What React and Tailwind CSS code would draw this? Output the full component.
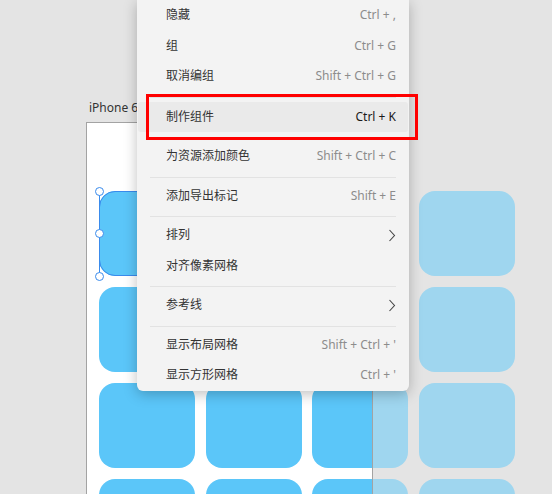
const menuItems = [
  { label: '隐藏', shortcut: 'Ctrl + ,' },
  { label: '组', shortcut: 'Ctrl + G' },
  { label: '取消编组', shortcut: 'Shift + Ctrl + G' },
  { sep: true, first: true },
  { label: '制作组件', shortcut: 'Ctrl + K', active: true },
  { sep: true },
  { label: '为资源添加颜色', shortcut: 'Shift + Ctrl + C' },
  { sep: true },
  { label: '添加导出标记', shortcut: 'Shift + E' },
  { sep: true },
  { label: '排列', arrow: true },
  { label: '对齐像素网格' },
  { sep: true },
  { label: '参考线', arrow: true },
  { sep: true },
  { label: '显示布局网格', shortcut: "Shift + Ctrl + '" },
  { label: '显示方形网格', shortcut: "Ctrl + '" },
];

function Chevron() {
  return (
    <svg width="8" height="13" viewBox="0 0 8 13" className="text-[#444]">
      <path d="M1.5 1 L6.5 6.5 L1.5 12" fill="none" stroke="currentColor" strokeWidth="1.1" />
    </svg>
  );
}

function TileGrid({ light = false, withSelection = false }) {
  const tiles = Array.from({ length: 16 });
  return (
    <div className="grid grid-cols-[repeat(4,96px)] auto-rows-[85px] gap-x-[10.5px] gap-y-[11px]">
      {tiles.map((_, i) => (
        <div
          key={i}
          className={`relative rounded-[16px] ${light ? 'bg-[#9fd6ef]' : 'bg-[#5bc6f9]'}`}
        >
          {withSelection && i === 0 && (
            <>
              <div className="absolute inset-0 rounded-[16px] border border-[#3a8bec]" />
              <div className="absolute left-0 top-0 bottom-0 w-px bg-[#3a8bec]" />
              <div className="absolute -left-[4.5px] -top-[4.5px] w-[9px] h-[9px] rounded-full bg-white border border-[#3a8bec]" />
              <div className="absolute -left-[4.5px] top-[38px] w-[9px] h-[9px] rounded-full bg-white border border-[#3a8bec]" />
              <div className="absolute -left-[4.5px] -bottom-[4.5px] w-[9px] h-[9px] rounded-full bg-white border border-[#3a8bec]" />
            </>
          )}
        </div>
      ))}
    </div>
  );
}

export default function App() {
  return (
    <div className="relative w-[552px] h-[494px] overflow-hidden bg-[#e4e4e4] font-['Noto_Sans','Noto_Sans_CJK_SC',sans-serif]">
      {/* Artboard */}
      <div className="absolute left-[86px] top-[100px] flex flex-col">
        <span className="pl-[3px] h-[22px] whitespace-nowrap text-[12px] leading-[16px] text-[#333]">
          iPhone 6、7、8 - 1
        </span>
        <div className="relative w-[287px] h-[420px]">
          <div className="absolute left-[13px] top-[69px]">
            <TileGrid light />
          </div>
          <div className="absolute inset-0 bg-white border border-[#a3a3a3] overflow-hidden">
            <div className="pl-[12px] pt-[68px]">
              <TileGrid withSelection />
            </div>
          </div>
        </div>
      </div>

      {/* Context menu */}
      <div className="absolute left-[137px] top-0 w-[272px] bg-[#f3f3f3] rounded-b-[6px] shadow-[0_3px_14px_rgba(0,0,0,0.25)]">
        {menuItems.map((item, i) =>
          item.sep ? (
            <div key={i} className={`${item.first ? 'h-[10px] pt-[5px]' : 'h-[9px] pt-[5px]'} px-[13px]`}>
              <div className="h-px bg-[#e2e2e2]" />
            </div>
          ) : (
            <div key={i} className="h-[30.5px] px-px">
              <div
                className={`h-full flex items-center justify-between pl-[28px] pr-[12px] rounded-[3px] ${
                  item.active ? 'bg-[#eaeaea]' : ''
                }`}
              >
                <span className="text-[12px] text-[#333]">{item.label}</span>
                {item.shortcut && (
                  <span className={`text-[12px] ${item.active ? 'text-[#1a1a1a]' : 'text-[#8c8c8c]'}`}>
                    {item.shortcut}
                  </span>
                )}
                {item.arrow && <Chevron />}
              </div>
            </div>
          )
        )}
      </div>

      {/* Highlight annotation */}
      <div className="absolute left-[146px] top-[94px] w-[272px] h-[46px] border-[3px] border-[#ff0000]" />
    </div>
  );
}
